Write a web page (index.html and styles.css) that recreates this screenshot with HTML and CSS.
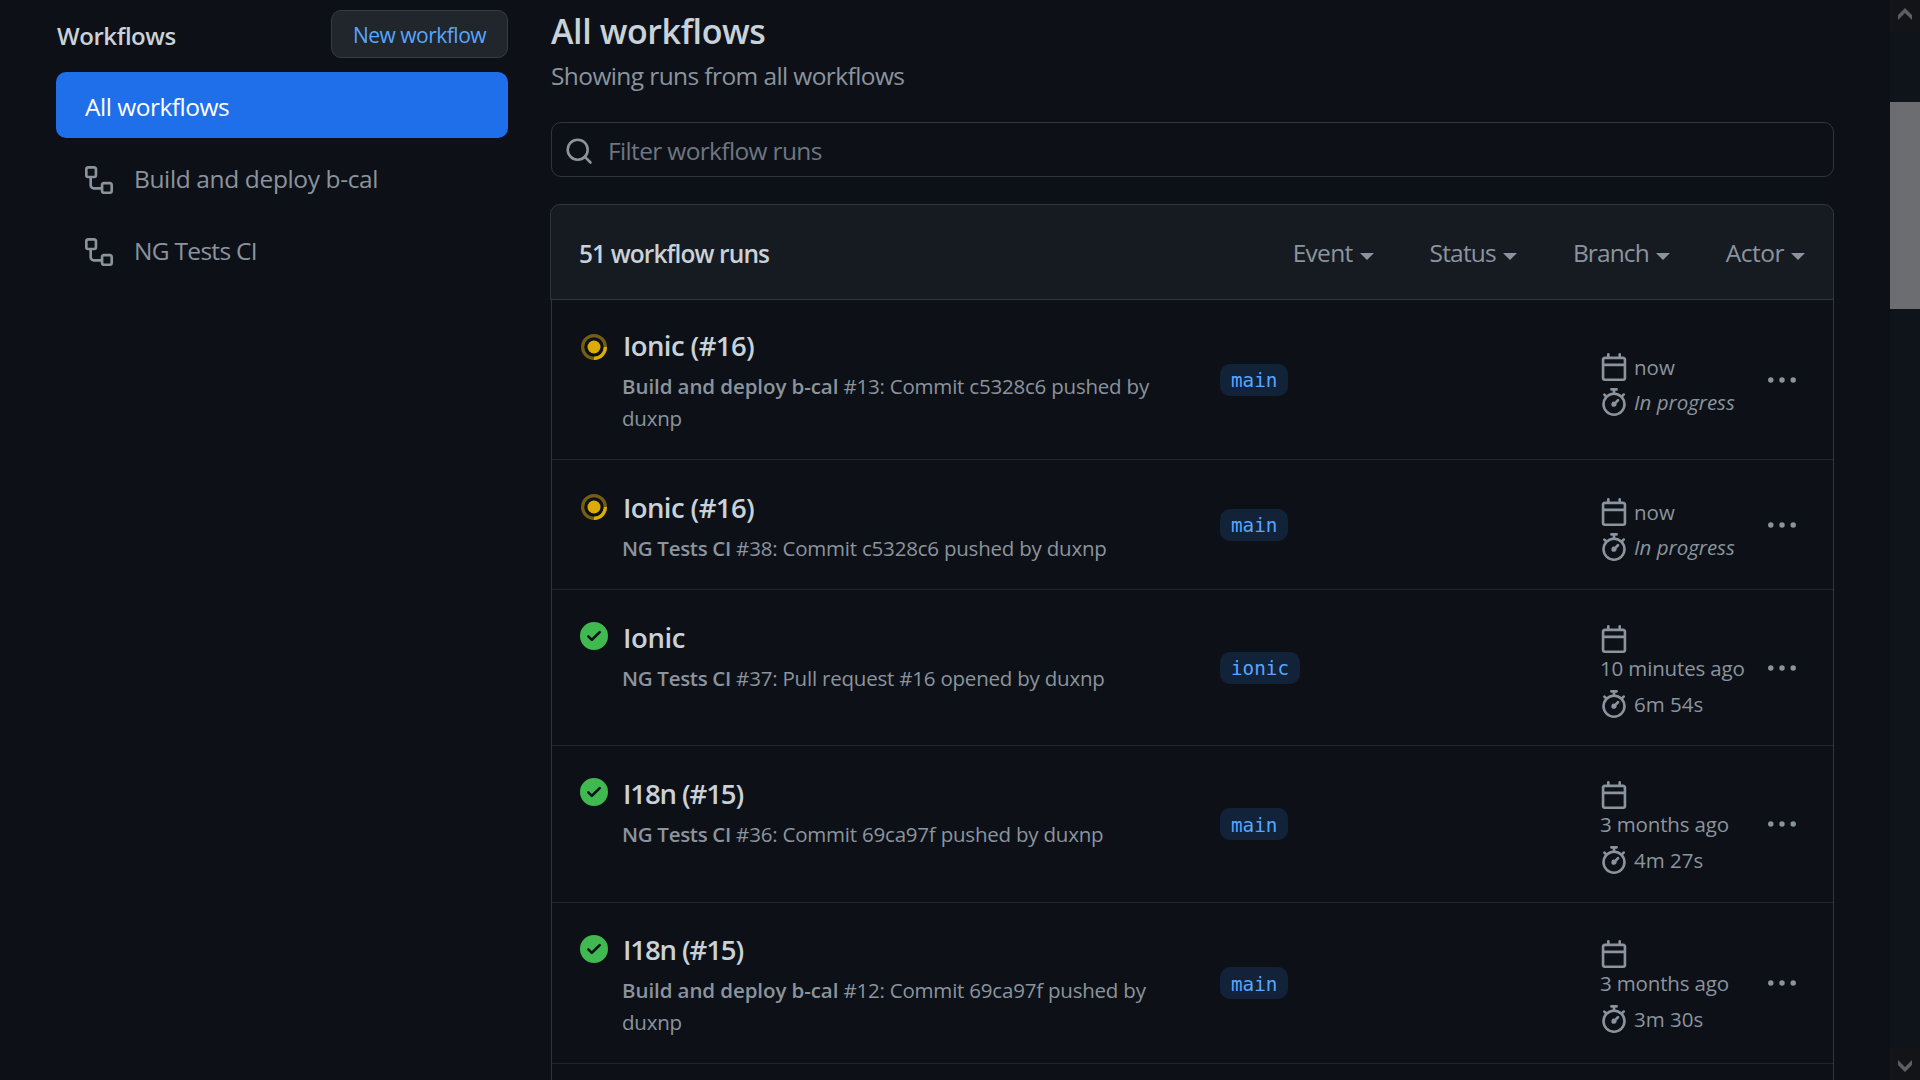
FILE: index.html
```html
<!DOCTYPE html>
<html lang="en">
<head>
<meta charset="utf-8">
<title>All workflows</title>
<link rel="stylesheet" href="styles.css">
</head>
<body>
<svg class="sprite" aria-hidden="true">
  <symbol id="i-workflow" viewBox="0 0 16 16"><path fill-rule="evenodd" d="M0 1.75C0 .784.784 0 1.75 0h3.5C6.216 0 7 .784 7 1.75v3.5A1.75 1.75 0 015.25 7H4v4a1 1 0 001 1h4v-1.25C9 9.784 9.784 9 10.75 9h3.5c.966 0 1.75.784 1.75 1.75v3.5A1.75 1.75 0 0114.25 16h-3.5A1.75 1.75 0 019 14.25v-.75H5A2.5 2.5 0 012.5 11V7h-.75A1.75 1.75 0 010 5.25v-3.5zm1.75-.25a.25.25 0 00-.25.25v3.5c0 .138.112.25.25.25h3.5a.25.25 0 00.25-.25v-3.5a.25.25 0 00-.25-.25h-3.5zm9 9a.25.25 0 00-.25.25v3.5c0 .138.112.25.25.25h3.5a.25.25 0 00.25-.25v-3.5a.25.25 0 00-.25-.25h-3.5z"/></symbol>
  <symbol id="i-search" viewBox="0 0 28 28"><g fill="none" stroke="currentColor" stroke-width="2.6" stroke-linecap="round"><circle cx="12.7" cy="12.7" r="10"/><path d="M19.9 19.9l5.6 5.6"/></g></symbol>
  <symbol id="i-calendar" viewBox="0 0 16 16"><path fill-rule="evenodd" d="M4.75 0a.75.75 0 01.75.75V2h5V.75a.75.75 0 011.5 0V2h1.25c.966 0 1.75.784 1.75 1.75v10.5A1.75 1.75 0 0113.25 16H2.75A1.75 1.75 0 011 14.25V3.75C1 2.784 1.784 2 2.75 2H4V.75A.75.75 0 014.75 0zm0 3.5h8.5a.25.25 0 01.25.25V6h-11V3.75a.25.25 0 01.25-.25h2zm-2.25 4v6.75c0 .138.112.25.25.25h10.5a.25.25 0 00.25-.25V7.5h-11z"/></symbol>
  <symbol id="i-stopwatch" viewBox="0 0 16 16"><path fill-rule="evenodd" d="M5.75.75A.75.75 0 016.5 0h3a.75.75 0 010 1.5h-.75v1l-.001.041a6.718 6.718 0 013.464 1.435l.007-.006.75-.75a.75.75 0 111.06 1.06l-.75.75-.006.007a6.75 6.75 0 11-10.548 0L2.72 5.03l-.75-.75a.75.75 0 011.06-1.06l.75.75.007.006A6.718 6.718 0 017.25 2.541a.756.756 0 010-.041v-1H6.5a.75.75 0 01-.75-.75zM8 14.5A5.25 5.25 0 108 4a5.25 5.25 0 000 10.5zm.389-6.7l1.33-1.33a.75.75 0 111.061 1.06L9.45 8.861A1.502 1.502 0 018 10.75a1.5 1.5 0 11.389-2.95z"/></symbol>
  <symbol id="i-check" viewBox="0 0 16 16"><path fill-rule="evenodd" d="M8 16A8 8 0 108 0a8 8 0 000 16zm3.78-9.72a.75.75 0 00-1.06-1.06L6.75 9.19 5.28 7.72a.75.75 0 00-1.06 1.06l2 2a.75.75 0 001.06 0l4.5-4.5z"/></symbol>
  <symbol id="i-progress" viewBox="0 0 16 16"><circle cx="8" cy="8" r="7" fill="none" stroke="currentColor" stroke-width="2" opacity=".5"/><path d="M15 8a7 7 0 01-7 7" fill="none" stroke="currentColor" stroke-width="2"/><circle cx="8" cy="8" r="4"/></symbol>
  <symbol id="i-kebab" viewBox="0 0 16 16"><circle cx="1.6" cy="8" r="1.55"/><circle cx="8" cy="8" r="1.55"/><circle cx="14.4" cy="8" r="1.55"/></symbol>
  <symbol id="i-caret" viewBox="0 0 14 7"><path d="M0 0h14L7 7z"/></symbol>
  <symbol id="i-chevron" viewBox="0 0 14 12"><path d="M7 0l7 7v5L7 5l-7 7V7z"/></symbol>
</svg>

<div class="page">
  <aside class="sidebar">
    <div class="sidebar-head">
      <h2>Workflows</h2>
      <a class="btn">New workflow</a>
    </div>
    <nav class="menu">
      <a class="menu-item active">All workflows</a>
      <a class="menu-item"><svg class="icon"><use href="#i-workflow"/></svg><span class="build">Build and deploy b-cal</span></a>
      <a class="menu-item"><svg class="icon"><use href="#i-workflow"/></svg><span class="tests">NG Tests CI</span></a>
    </nav>
  </aside>

  <main class="main">
    <h1>All workflows</h1>
    <p class="subtitle">Showing runs from all workflows</p>
    <div class="filter"><svg class="icon"><use href="#i-search"/></svg><span>Filter workflow runs</span></div>

    <section class="list">
      <header class="list-head">
        <strong>51 workflow runs</strong>
        <div class="filters">
          <span class="drop event">Event<svg class="caret"><use href="#i-caret"/></svg></span>
          <span class="drop status">Status<svg class="caret"><use href="#i-caret"/></svg></span>
          <span class="drop branch">Branch<svg class="caret"><use href="#i-caret"/></svg></span>
          <span class="drop">Actor<svg class="caret"><use href="#i-caret"/></svg></span>
        </div>
      </header>
      <div class="rows">
        <article class="run first">
          <svg class="state running"><use href="#i-progress"/></svg>
          <div class="info"><h3>Ionic (#16)</h3><p><b>Build and deploy b-cal</b> #13: Commit c5328c6 pushed by duxnp</p></div>
          <div><span class="label">main</span></div>
          <div class="meta">
            <div class="line"><svg class="icon"><use href="#i-calendar"/></svg><span>now</span></div>
            <div class="line"><svg class="icon"><use href="#i-stopwatch"/></svg><em>In progress</em></div>
          </div>
          <svg class="icon kebab"><use href="#i-kebab"/></svg>
        </article>
        <article class="run second">
          <svg class="state running"><use href="#i-progress"/></svg>
          <div class="info"><h3>Ionic (#16)</h3><p><b class="ng">NG Tests CI</b> #38: Commit c5328c6 pushed by duxnp</p></div>
          <div><span class="label">main</span></div>
          <div class="meta">
            <div class="line"><svg class="icon"><use href="#i-calendar"/></svg><span>now</span></div>
            <div class="line"><svg class="icon"><use href="#i-stopwatch"/></svg><em>In progress</em></div>
          </div>
          <svg class="icon kebab"><use href="#i-kebab"/></svg>
        </article>
        <article class="run third">
          <svg class="state done"><use href="#i-check"/></svg>
          <div class="info"><h3>Ionic</h3><p><b class="ng">NG Tests CI</b> #37: Pull request #16 opened by duxnp</p></div>
          <div><span class="label">ionic</span></div>
          <div class="meta">
            <svg class="icon"><use href="#i-calendar"/></svg>
            <div class="ago">10 minutes ago</div>
            <div class="line"><svg class="icon"><use href="#i-stopwatch"/></svg><span>6m 54s</span></div>
          </div>
          <svg class="icon kebab"><use href="#i-kebab"/></svg>
        </article>
        <article class="run fourth">
          <svg class="state done"><use href="#i-check"/></svg>
          <div class="info"><h3 class="tight">I18n (#15)</h3><p><b class="ng">NG Tests CI</b> #36: Commit 69ca97f pushed by duxnp</p></div>
          <div><span class="label">main</span></div>
          <div class="meta">
            <svg class="icon"><use href="#i-calendar"/></svg>
            <div class="ago">3 months ago</div>
            <div class="line"><svg class="icon"><use href="#i-stopwatch"/></svg><span>4m 27s</span></div>
          </div>
          <svg class="icon kebab"><use href="#i-kebab"/></svg>
        </article>
        <article class="run fifth">
          <svg class="state done"><use href="#i-check"/></svg>
          <div class="info"><h3 class="tight">I18n (#15)</h3><p><b>Build and deploy b-cal</b> #12: Commit 69ca97f pushed by duxnp</p></div>
          <div><span class="label">main</span></div>
          <div class="meta">
            <svg class="icon"><use href="#i-calendar"/></svg>
            <div class="ago">3 months ago</div>
            <div class="line"><svg class="icon"><use href="#i-stopwatch"/></svg><span>3m 30s</span></div>
          </div>
          <svg class="icon kebab"><use href="#i-kebab"/></svg>
        </article>
      </div>
    </section>
  </main>

  <div class="scrollbar">
    <div class="scroll-btn"><svg class="chevron"><use href="#i-chevron"/></svg></div>
    <div class="track"><div class="thumb"></div></div>
    <div class="scroll-btn down"><svg class="chevron"><use href="#i-chevron"/></svg></div>
  </div>
</div>
</body>
</html>
```
FILE: styles.css
```css
* { box-sizing: border-box; }

body {
  margin: 0;
  height: 1080px;
  overflow: hidden;
  background: #0d1117;
  color: #c9d1d9;
  font-family: "Open Sans", "Noto Sans", sans-serif;
  font-size: 24.5px;
}

h1, h2, h3, p { margin: 0; }
svg { display: block; flex: none; fill: currentColor; }
.sprite { display: none; }
.icon { width: 28px; height: 28px; }

.page { display: flex; height: 1080px; padding-left: 56px; }

/* Sidebar */
.sidebar { width: 452px; margin-right: 42px; padding-top: 10px; flex: none; }
.sidebar-head { display: flex; justify-content: space-between; align-items: center; height: 48px; }
.sidebar-head h2 { padding: 3px 0 0 1px; font-size: 24px; font-weight: 600; letter-spacing: -.45px; }
.btn {
  display: flex;
  align-items: center;
  justify-content: center;
  width: 177px;
  height: 48px;
  padding-top: 1px;
  border: 1px solid #363b42;
  border-radius: 10px;
  background: #21262d;
  color: #58a6ff;
  font-size: 21px;
  letter-spacing: -.5px;
}
.menu { display: grid; gap: 6px; margin-top: 14px; }
.menu-item {
  display: flex;
  align-items: center;
  height: 66px;
  padding: 3px 28px 0 29px;
  border-radius: 10px;
  color: #8b949e;
}
.menu-item .icon { margin: 3px 21px 0 0; }
.menu-item.active { background: #1f6feb; color: #fff; letter-spacing: -.5px; }
.build { letter-spacing: -.37px; }
.tests { letter-spacing: -.7px; }

/* Main column */
.main { width: 1284px; margin-right: 56px; padding-top: 11px; flex: none; }
h1 { padding-left: 1px; font-size: 34px; line-height: 41px; font-weight: 600; letter-spacing: -.4px; }
.subtitle { margin-top: 5px; padding-left: 1px; line-height: 37px; color: #8b949e; letter-spacing: -.6px; }
.filter {
  display: flex;
  align-items: center;
  height: 55px;
  margin: 28px 0 0 1px;
  padding-left: 13px;
  border: 1px solid #30363d;
  border-radius: 10px;
  color: #6e7681;
  letter-spacing: -.65px;
}
.filter .icon { margin: 3px 15px 0 0; color: #8b949e; }
.filter span { padding-top: 2px; }

.list { margin-top: 27px; }
.list-head {
  display: flex;
  align-items: center;
  justify-content: space-between;
  height: 96px;
  padding: 1px 28px 0;
  border: 1px solid #30363d;
  border-radius: 10px 10px 0 0;
  background: #161b22;
}
.list-head strong { padding-top: 1px; font-weight: 600; letter-spacing: -.9px; }
.filters { display: flex; gap: 56px; color: #8b949e; }
.drop { display: flex; align-items: center; letter-spacing: -.5px; }
.event { letter-spacing: -.7px; }
.status { letter-spacing: -.8px; }
.branch { letter-spacing: -.9px; }
.caret { width: 14px; height: 7px; margin: 7px 0 0 7px; }

/* Runs */
.rows { margin-left: 1px; border: solid #30363d; border-width: 0 1px; height: 800px; }
.run {
  display: grid;
  grid-template-columns: 28px 612px 380px 168px 28px;
  align-items: center;
  padding-left: 28px;
  border-bottom: 1px solid #21262d;
  font-size: 20.5px;
  color: #8b949e;
}
.first { height: 160px; --top: 27px; }
.second { height: 130px; --top: 29px; }
.third { height: 156px; --top: 29px; }
.fourth { height: 157px; --top: 29px; }
.fifth { height: 161px; --top: 28px; }
.state { align-self: start; }
.running { width: 26px; height: 26px; margin: calc(var(--top) + 7px) 0 0 1px; color: #dbab0a; }
.second .running { margin-top: 34px; }
.done { width: 28px; height: 28px; margin-top: calc(var(--top) + 3px); color: #3fb950; }
.fifth .done { margin-top: 32px; }
.info { align-self: start; padding: var(--top) 24px 0 14px; }
.info h3 { padding-left: 1px; font-size: 27.5px; line-height: 38px; font-weight: 600; letter-spacing: -.6px; color: #c9d1d9; }
.info h3.tight { letter-spacing: -1.1px; }
.third h3 { letter-spacing: -.4px; }
.info p { margin-top: 5px; line-height: 32px; letter-spacing: -.21px; }
.info b { font-weight: 600; letter-spacing: -.08px; }
.info b.ng { letter-spacing: -.3px; }
.label {
  display: inline-flex;
  align-items: center;
  height: 32px;
  padding: 2px 11px 0;
  border-radius: 10px;
  background: #122339;
  color: #58a6ff;
  font: 19.3px "DejaVu Sans Mono", monospace;
}
.meta { padding-top: 10px; }
.line { display: flex; align-items: center; gap: 6px; height: 35.5px; }
.line em { letter-spacing: 0; }
.ago { margin-bottom: 2px; line-height: 31px; letter-spacing: -.15px; white-space: nowrap; }
.third .meta, .fourth .meta, .fifth .meta { padding-top: 11px; }

/* Scrollbar */
.scrollbar { display: flex; flex-direction: column; width: 30px; background: #0f141b; flex: none; }
.scroll-btn { height: 32px; padding: 8px 0 0 8px; background: #121418; color: #5c5e62; }
.scroll-btn.down { transform: rotate(180deg); }
.chevron { width: 14px; height: 12px; }
.track { flex: 1; padding-top: 70px; }
.thumb { height: 207px; background: #6c6d70; }
```
